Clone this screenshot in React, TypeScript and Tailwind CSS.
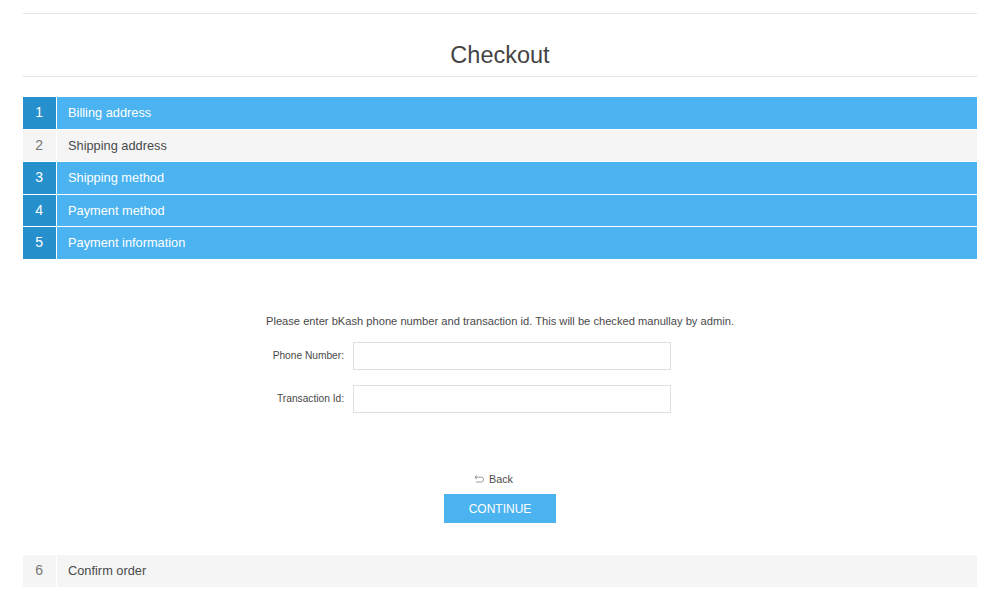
const steps = [
  { n: 1, label: "Billing address", active: true },
  { n: 2, label: "Shipping address", active: false },
  { n: 3, label: "Shipping method", active: true },
  { n: 4, label: "Payment method", active: true },
  { n: 5, label: "Payment information", active: true },
];

function StepRow({ n, label, active }: { n: number; label: string; active: boolean }) {
  return (
    <div className={`flex h-[32.5px] border-b border-white text-[12.8px] ${active ? "bg-[#4bb3f0] text-white" : "bg-[#f5f5f5] text-[#4a4a4a]"}`}>
      <div className={`flex w-[33.5px] items-center justify-center border-r border-white text-[14px] ${active ? "bg-[#2690cc]" : "text-[#777]"}`}>
        {n}
      </div>
      <div className="flex items-center pl-[11.5px]">{label}</div>
    </div>
  );
}

function Field({ label }: { label: string }) {
  return (
    <div className="flex items-center">
      <label className="w-[330px] pr-[9px] text-right text-[10.2px] text-[#4a4a4a]">{label}</label>
      <input type="text" className="h-[28.5px] w-[318px] border border-[#e0e0e0] bg-white" />
    </div>
  );
}

export default function App() {
  return (
    <div className="h-[601px] overflow-hidden bg-white px-[23px] pt-[13px] font-['Liberation_Sans',Arial,sans-serif]">
      <div className="border-t border-[#e3e3e3]" />
      <h1 className="flex h-[63px] items-center justify-center border-b border-[#e3e3e3] pt-[22px] text-[23.5px] text-[#444]">
        Checkout
      </h1>

      <div className="mt-[20px]">
        {steps.map((s) => (
          <StepRow key={s.n} {...s} />
        ))}
      </div>

      <p className="mt-[54px] text-center text-[11.15px] leading-[14px] text-[#4a4a4a]">
        Please enter bKash phone number and transaction id. This will be checked manullay by admin.
      </p>
      <div className="mt-[14px] flex flex-col gap-[14.5px]">
        <Field label="Phone Number:" />
        <Field label="Transaction Id:" />
      </div>

      <div className="mt-[58.5px] flex flex-col items-center">
        <a className="mr-[13px] flex items-center gap-[5px] text-[10.8px] leading-[14px] text-[#4a4a4a]">
          <svg width="10" height="8" viewBox="0 0 10 8" fill="none" stroke="#999" strokeWidth="1">
            <path d="M3 0.5 L0.8 2.2 L3 4 M1 2.2 H7.5 Q9.5 2.2 9.5 4.6 Q9.5 7 7.5 7 H2" />
          </svg>
          Back
        </a>
        <button className="mt-[8px] h-[29.5px] w-[112px] bg-[#4bb3f0] pt-[1px] text-[12px] text-white">CONTINUE</button>
      </div>

      <div className="mt-[31.5px] flex h-[32px] bg-[#f5f5f5] text-[12.8px] text-[#4a4a4a]">
        <div className="flex w-[33.5px] items-center justify-center border-r border-white text-[14px] text-[#777]">6</div>
        <div className="flex items-center pl-[11.5px]">Confirm order</div>
      </div>
    </div>
  );
}
